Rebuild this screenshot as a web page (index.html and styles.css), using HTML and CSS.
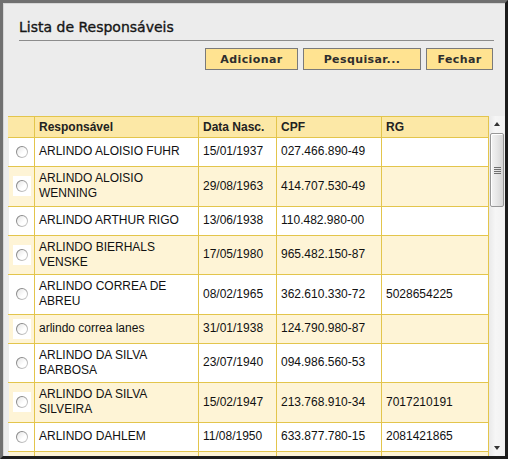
FILE: index.html
```html
<!DOCTYPE html>
<html lang="pt-BR">
<head>
  <meta charset="UTF-8">
  <meta name="viewport" content="width=device-width, initial-scale=1.0">
  <title>Lista de Responsáveis</title>

  <link rel="stylesheet" href="styles.css">
</head>
<body>
  <div class="window">
    <div class="head">
      <h1 class="title">Lista de Responsáveis</h1>
      <div class="actions">
        <button class="btn btn-add">Adicionar</button>
        <button class="btn btn-search">Pesquisar...</button>
        <button class="btn btn-close">Fechar</button>
      </div>
    </div>

    <div class="grid">
      <div class="grid-body">
        <table class="list">
          <col class="c-sel">
          <col class="c-name">
          <col class="c-date">
          <col class="c-cpf">
          <col class="c-rg">
          <tr>
            <th></th>
            <th>Responsável</th>
            <th>Data Nasc.</th>
            <th>CPF</th>
            <th>RG</th>
          </tr>
          <tr>
            <td class="sel"><span class="radio"></span></td>
            <td>ARLINDO ALOISIO FUHR</td>
            <td>15/01/1937</td>
            <td>027.466.890-49</td>
            <td></td>
          </tr>
          <tr>
            <td class="sel"><span class="radio"></span></td>
            <td>ARLINDO ALOISIO WENNING</td>
            <td>29/08/1963</td>
            <td>414.707.530-49</td>
            <td></td>
          </tr>
          <tr>
            <td class="sel"><span class="radio"></span></td>
            <td>ARLINDO ARTHUR RIGO</td>
            <td>13/06/1938</td>
            <td>110.482.980-00</td>
            <td></td>
          </tr>
          <tr>
            <td class="sel"><span class="radio"></span></td>
            <td>ARLINDO BIERHALS VENSKE</td>
            <td>17/05/1980</td>
            <td>965.482.150-87</td>
            <td></td>
          </tr>
          <tr>
            <td class="sel"><span class="radio"></span></td>
            <td>ARLINDO CORREA DE ABREU</td>
            <td>08/02/1965</td>
            <td>362.610.330-72</td>
            <td>5028654225</td>
          </tr>
          <tr>
            <td class="sel"><span class="radio"></span></td>
            <td>arlindo correa lanes</td>
            <td>31/01/1938</td>
            <td>124.790.980-87</td>
            <td></td>
          </tr>
          <tr>
            <td class="sel"><span class="radio"></span></td>
            <td>ARLINDO DA SILVA BARBOSA</td>
            <td>23/07/1940</td>
            <td>094.986.560-53</td>
            <td></td>
          </tr>
          <tr>
            <td class="sel"><span class="radio"></span></td>
            <td>ARLINDO DA SILVA SILVEIRA</td>
            <td>15/02/1947</td>
            <td>213.768.910-34</td>
            <td>7017210191</td>
          </tr>
          <tr>
            <td class="sel"><span class="radio"></span></td>
            <td>ARLINDO DAHLEM</td>
            <td>11/08/1950</td>
            <td>633.877.780-15</td>
            <td>2081421865</td>
          </tr>
          <tr>
            <td class="sel"><span class="radio"></span></td>
            <td></td>
            <td></td>
            <td></td>
            <td></td>
          </tr>
        </table>
      </div>

      <!-- barra de rolagem desenhada (estilo windows) -->
      <div class="scrollbar">
        <div class="sb-arrow sb-up"></div>
        <div class="sb-track">
          <div class="sb-thumb"><span class="sb-grip"></span></div>
        </div>
        <div class="sb-arrow sb-down"></div>
      </div>
    </div>
  </div>
</body>
</html>
```

FILE: styles.css
```css
* {
  box-sizing: border-box;
}

html, body {
  margin: 0;
  padding: 0;
}

/* moldura da janela */
.window {
  width: 508px;
  height: 459px;
  display: flex;
  flex-direction: column;
  background: #ececec;
  border-style: solid;
  border-width: 3px;
  border-color: #707070 #1c1c1c #1c1c1c #707070;
  box-shadow: inset 1px 1px 0 #d6d6d6;
  overflow: hidden;
}

.head {
  padding: 16px 11px 0 16px;
}

.title {
  margin: 0;
  padding-bottom: 4px;
  border-bottom: 1px solid #8c8c8c;
  font-family: "DejaVu Sans", sans-serif;
  font-size: 14px;
  font-weight: normal;
  line-height: 17px;
  color: #161616;
  -webkit-text-stroke: 0.35px #161616; /* o original e um pouco mais grosso */
}

.actions {
  display: flex;
  justify-content: flex-end;
  gap: 5px;
  margin-top: 7px;
  padding-right: 1px;
}

.btn {
  height: 22px;
  padding: 0;
  border: 1px solid #7a7a7a;
  background: #ffe391;
  font-family: "DejaVu Sans", sans-serif;
  font-size: 11px;
  font-weight: bold;
  letter-spacing: 0.4px;
  color: #2e2e2e;
}
.btn-add {
  width: 93px;
}
.btn-search {
  width: 118px;
}
.btn-close {
  width: 67px;
}

/* area da lista */
.grid {
  flex: 1;
  display: flex;
  margin: 46px 0 0 5px;
  min-height: 0;
}

.grid-body {
  width: 481px;
  overflow: hidden;
}

.list {
  width: 481px;
  table-layout: fixed;
  border-collapse: collapse;
  font-family: "Liberation Sans", Arial, sans-serif;
  font-size: 12px;
  color: #111;
}
.c-sel { width: 26px; }
.c-name { width: 164px; }
.c-date { width: 78px; }
.c-cpf { width: 105px; }
.c-rg { width: 107px; }

.list th,
.list td {
  border: 1px solid #e3c54c;
  text-align: left;
  vertical-align: middle;
}
.list th {
  padding: 3px 4px;
  line-height: 14px;
  background: #fce8a6;
  font-weight: bold;
  color: #222;
}
.list th:first-child {
  border-left-color: #fce8a6;
}
.list td {
  padding: 4px 4px;
  line-height: 15.25px;
  background: #fff;
}
.list tr:nth-child(odd) td {
  background: #fef4d6;
}
.list td:first-child {
  border-left-color: transparent;
}
.list td.sel {
  padding: 4px 0;
}

/* radio no estilo do windows */
.radio {
  display: block;
  width: 18px;
  height: 20px;
  margin: 0 auto;
  position: relative;
  background: #fff;
}
.radio::before {
  content: '';
  position: absolute;
  left: 3px;
  top: 4px;
  width: 12px;
  height: 12px;
  border-radius: 50%;
  background: linear-gradient(135deg, #6f6f6f, #b9b9b9 70%, #e0e0e0);
}
.radio::after {
  content: '';
  position: absolute;
  left: 4px;
  top: 5px;
  width: 10px;
  height: 10px;
  border-radius: 50%;
  background: linear-gradient(135deg, #e4e4e4, #fff 60%);
}

/* barra de rolagem */
.scrollbar {
  width: 16px;
  display: flex;
  flex-direction: column;
  background: linear-gradient(90deg, #e9e9e9, #f6f6f6 40%, #f1f1f1);
}
.sb-arrow {
  height: 17px;
  position: relative;
}
.sb-arrow::after {
  content: '';
  position: absolute;
  left: 5px;
  border-left: 3.5px solid transparent;
  border-right: 3.5px solid transparent;
}
.sb-up::after {
  top: 6px;
  border-bottom: 4px solid #333;
}
.sb-down::after {
  top: 7px;
  border-top: 4px solid #333;
}
.sb-track {
  flex: 1;
  padding: 0 1px;
}
.sb-thumb {
  height: 74px;
  border: 1px solid #979797;
  border-radius: 2px;
  background: linear-gradient(90deg, #f3f3f3, #e6e6e6 50%, #d5d5d5);
  box-shadow: inset 1px 1px 0 #fff;
  display: flex;
  align-items: center;
  justify-content: center;
}
.sb-grip {
  width: 7px;
  height: 7px;
  background: repeating-linear-gradient(180deg, #6f6f6f 0, #6f6f6f 1px, transparent 1px, transparent 2px);
}
```
